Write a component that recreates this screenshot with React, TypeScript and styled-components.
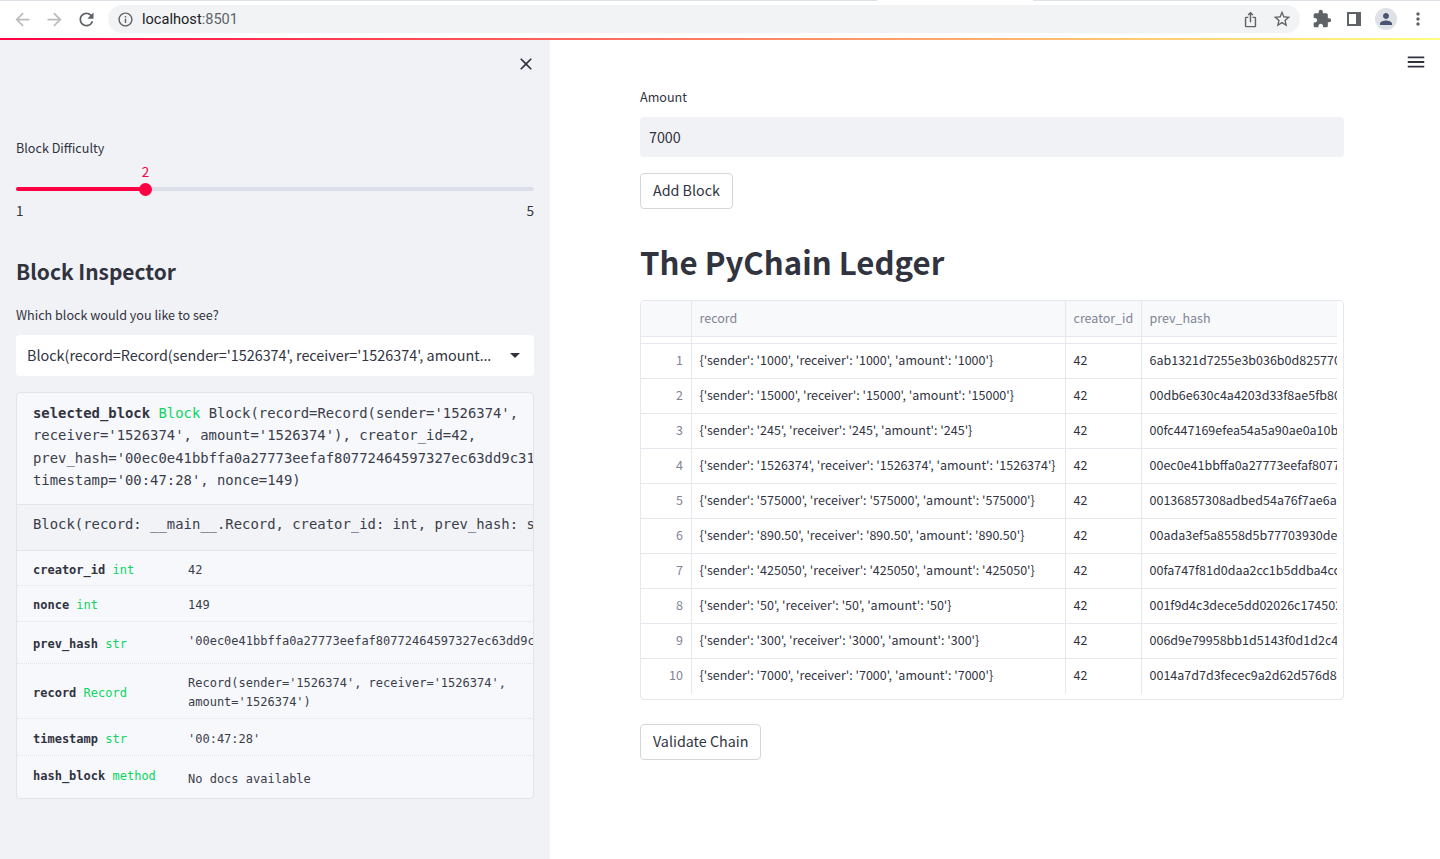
import React from "react";
import styled, { createGlobalStyle } from "styled-components";
import {
  MdArrowBack,
  MdArrowForward,
  MdClose,
  MdExtension,
  MdInfoOutline,
  MdIosShare,
  MdMenu,
  MdMoreVert,
  MdPerson,
  MdRefresh,
  MdStarBorder,
} from "react-icons/md";

const sans = `"Noto Sans CJK SC", "Noto Sans", sans-serif`;
const mono = `"DejaVu Sans Mono", "Liberation Mono", monospace`;
const red = "#ff0044";
const ink = "#31333f";

const GlobalStyle = createGlobalStyle`
  html, body { margin: 0; padding: 0; height: 100%; overflow: hidden; background: #fff; }
  * { box-sizing: border-box; }
  #root { height: 100%; }
`;

const Page = styled.div`
  height: 859px;
  display: flex;
  flex-direction: column;
  font-family: ${sans};
  color: ${ink};
`;

const Chrome = styled.header`
  height: 38px;
  flex: none;
  display: flex;
  flex-direction: column;
  background: #fff;
`;

const TabEdge = styled.div`
  height: 1px;
  display: flex;
  background: #dee1e6;
`;

const TabGap = styled.div`
  width: 156px;
  margin-left: 877px;
  background: #fff;
`;

const ChromeRow = styled.div`
  flex: 1;
  display: flex;
  align-items: center;
  padding: 3px 10px 4px 10px;
`;

const NavButton = styled.span<{ $off?: boolean; $gap?: number }>`
  width: 24px;
  height: 24px;
  margin-right: ${(p) => p.$gap ?? 8}px;
  display: flex;
  align-items: center;
  justify-content: center;
  font-size: 21px;
  color: ${(p) => (p.$off ? "#babcbe" : "#5f6368")};
`;

const Omnibox = styled.div`
  flex: 1;
  height: 28px;
  margin-left: 1px;
  padding: 0 6px 0 9px;
  display: flex;
  align-items: center;
  border-radius: 14px;
  background: #f1f3f4;
  color: #5f6368;
`;

const Url = styled.span`
  margin-left: 8px;
  flex: 1;
  font: 14.6px "Roboto", sans-serif;
  color: #5f6368;
  b { font-weight: 400; color: #202124; }
`;

const OmniIcon = styled.span`
  width: 24px;
  margin-left: 8px;
  display: flex;
  justify-content: center;
  font-size: 20px;
  color: #5f6368;
`;

const ToolIcon = styled.span<{ $left: number }>`
  width: 24px;
  height: 24px;
  margin-left: ${(p) => p.$left}px;
  display: flex;
  align-items: center;
  justify-content: center;
  font-size: 20px;
  color: #5f6368;
`;

const Avatar = styled.span`
  width: 22px;
  height: 22px;
  margin-left: 9px;
  display: flex;
  align-items: center;
  justify-content: center;
  border-radius: 50%;
  background: #dee1e6;
  color: #4a5573;
  font-size: 18px;
`;

const Decoration = styled.div`
  height: 2px;
  flex: none;
  background: linear-gradient(90deg, ${red}, #ffff80);
`;

const Body = styled.div`
  flex: 1;
  min-height: 0;
  display: flex;
`;

const Sidebar = styled.aside`
  width: 550px;
  flex: none;
  padding: 0 16px;
  background: #f0f2f6;
`;

const CloseRow = styled.div`
  height: 98px;
  padding: 14px 0 0;
  margin-right: -2px;
  display: flex;
  justify-content: flex-end;
  font-size: 20px;
  color: ${ink};
`;

const Label = styled.div`
  font-size: 12.6px;
  line-height: 20px;
  color: ${ink};
`;

const SliderBox = styled.div`
  position: relative;
  height: 62px;
  padding-top: 29px;
`;

const Track = styled.div`
  height: 4px;
  border-radius: 2px;
  background: #dcdfe9;
`;

const TrackFill = styled.div`
  position: relative;
  height: 100%;
  border-radius: 2px;
  background: ${red};
`;

const Thumb = styled.span`
  position: absolute;
  right: -6.5px;
  top: -4.5px;
  width: 13px;
  height: 13px;
  border-radius: 50%;
  background: ${red};
`;

const ThumbValue = styled.span`
  position: absolute;
  right: -10px;
  top: -26px;
  width: 20px;
  text-align: center;
  font-size: 13.5px;
  line-height: 20px;
  color: ${red};
`;

const SliderEnds = styled.div`
  margin-top: 9px;
  display: flex;
  justify-content: space-between;
  font-size: 13.5px;
  line-height: 20px;
`;

const SideHeading = styled.h2`
  margin: 33px 0 0;
  font-size: 20.9px;
  line-height: 36px;
  font-weight: 700;
  color: ${ink};
`;

const SelectLabel = styled(Label)`
  margin-top: 16px;
`;

const Select = styled.div`
  margin-top: 10px;
  height: 41px;
  padding: 0 12px 2px 11px;
  display: flex;
  align-items: center;
  gap: 15px;
  border-radius: 4px;
  background: #fff;
  font-size: 14.4px;
`;

const SelectText = styled.span`
  flex: 1;
  min-width: 0;
  overflow: hidden;
  white-space: nowrap;
`;

const Dots = styled.span`
  font-family: "Noto Sans", sans-serif;
`;

const Caret = styled.span`
  width: 0;
  height: 0;
  margin: 2px 2px 0 0;
  border-left: 5px solid transparent;
  border-right: 5px solid transparent;
  border-top: 5px solid ${ink};
`;

const Inspect = styled.section`
  margin-top: 16px;
  height: 407px;
  overflow: hidden;
  border: 1px solid #e1e4ea;
  border-radius: 4px;
  background: #f6f8fc;
  font-family: ${mono};
  color: #3b3d4a;
`;

const InspectHead = styled.div`
  height: 112px;
  padding: 9px 0 0 16px;
  border-bottom: 1px solid #e2e5ea;
  font-size: 13.9px;
  line-height: 22.3px;
  white-space: pre;
`;

const InspectDoc = styled.div`
  height: 46px;
  padding: 8px 0 0 16px;
  background: #f1f3f7;
  border-bottom: 1px solid #e2e5ea;
  font-size: 13.9px;
  line-height: 22.4px;
  white-space: pre;
`;

const Name = styled.b`
  font-weight: 700;
  color: #31333f;
`;

const TypeTag = styled.span`
  color: #09d65f;
`;

const AttrRow = styled.div<{ $height: number }>`
  height: ${(p) => p.$height}px;
  display: grid;
  grid-template-columns: 155px 1fr;
  align-items: center;
  padding: 4px 0 0 16px;
  border-bottom: 1px dotted #dfe2e8;
  font-size: 12px;
  line-height: 19px;
  white-space: pre;

  &:last-child { border-bottom: none; }
`;

const AttrName = styled.div<{ $lift?: number }>`
  margin-top: ${(p) => -(p.$lift ?? 0)}px;
  margin-bottom: ${(p) => p.$lift ?? 0}px;
`;

const AttrValue = styled.div<{ $lift?: number }>`
  min-width: 0;
  overflow: hidden;
  margin-top: ${(p) => -(p.$lift ?? 0)}px;
  margin-bottom: ${(p) => p.$lift ?? 0}px;
`;

const Main = styled.main`
  position: relative;
  flex: 1;
  padding: 47px 96px 0 90px;
`;

const MenuButton = styled.span`
  position: absolute;
  top: 11px;
  right: 13px;
  display: flex;
  font-size: 22px;
  color: ${ink};
`;

const AmountInput = styled.div`
  margin-top: 10px;
  height: 40px;
  padding: 0 9px 2px;
  display: flex;
  align-items: center;
  border-radius: 4px;
  background: #f0f2f6;
  font-size: 14.3px;
`;

const Button = styled.button<{ $top: number }>`
  display: block;
  margin-top: ${(p) => p.$top}px;
  height: 36px;
  padding: 0 12px 3px;
  border: 1px solid #d5d6da;
  border-radius: 4px;
  background: #fff;
  font-family: ${sans};
  font-size: 14.3px;
  color: ${ink};
`;

const Heading = styled.h1`
  margin: 29px 0 0;
  height: 62px;
  font-size: 31.2px;
  line-height: 48px;
  font-weight: 700;
  color: ${ink};
`;

const Table = styled.div`
  height: 400px;
  padding-right: 6px;
  border: 1px solid #e6e8ee;
  border-radius: 4px;
  overflow: hidden;
  font-size: 12.5px;
`;

const TableRow = styled.div<{ $kind?: "head" | "gap" }>`
  display: grid;
  grid-template-columns: 50px 374px 76px 1fr;
  height: ${(p) => (p.$kind === "head" ? 36 : p.$kind === "gap" ? 7 : 35)}px;
  background: ${(p) => (p.$kind === "head" ? "#f8f9fb" : "#fff")};
  border-bottom: 1px solid #e6e8ee;

  &:last-child { border-bottom: none; }
`;

const Cell = styled.div<{ $index?: boolean; $head?: boolean }>`
  display: flex;
  align-items: center;
  justify-content: ${(p) => (p.$index ? "flex-end" : "flex-start")};
  padding: 0 8px ${(p) => (p.$head ? 2 : 4)}px 7.5px;
  overflow: hidden;
  white-space: nowrap;
  border-left: ${(p) => (p.$index ? "none" : "1px solid #e6e8ee")};
  color: ${(p) => (p.$head || p.$index ? "#808495" : ink)};
`;

const rows = [
  ["1000", "1000", "1000", "6ab1321d7255e3b036b0d825770a41f6"],
  ["15000", "15000", "15000", "00db6e630c4a4203d33f8ae5fb80a41f"],
  ["245", "245", "245", "00fc447169efea54a5a90ae0a10b3c9e"],
  ["1526374", "1526374", "1526374", "00ec0e41bbffa0a27773eefaf80772464"],
  ["575000", "575000", "575000", "00136857308adbed54a76f7ae6a1c0d2"],
  ["890.50", "890.50", "890.50", "00ada3ef5a8558d5b77703930de41f2a"],
  ["425050", "425050", "425050", "00fa747f81d0daa2cc1b5ddba4cc90e1"],
  ["50", "50", "50", "001f9d4c3dece5dd02026c17450210ab"],
  ["300", "3000", "300", "006d9e79958bb1d5143f0d1d2c4e7713"],
  ["7000", "7000", "7000", "0014a7d7d3fecec9a2d62d576d8e91c4"],
];

const fullHash = "'00ec0e41bbffa0a27773eefaf80772464597327ec63dd9c31aa4'";

function ChromeBar() {
  return (
    <Chrome>
      <TabEdge><TabGap /></TabEdge>
      <ChromeRow>
        <NavButton $off><MdArrowBack /></NavButton>
        <NavButton $off><MdArrowForward /></NavButton>
        <NavButton $gap={9}><MdRefresh /></NavButton>
        <Omnibox>
          <MdInfoOutline size={17} />
          <Url><b>localhost</b>:8501</Url>
          <OmniIcon><MdIosShare size={17} /></OmniIcon>
          <OmniIcon><MdStarBorder /></OmniIcon>
        </Omnibox>
        <ToolIcon $left={10}><MdExtension /></ToolIcon>
        <ToolIcon $left={8}>
          <svg width="14" height="14" viewBox="0 0 14 14">
            <path fill="#5f6368" fillRule="evenodd" d="M0 0h14v14H0zM2 2v10h7V2z" />
          </svg>
        </ToolIcon>
        <Avatar><MdPerson /></Avatar>
        <ToolIcon $left={9}><MdMoreVert /></ToolIcon>
      </ChromeRow>
    </Chrome>
  );
}

function Slider({ min, max, value }: { min: number; max: number; value: number }) {
  const pct = ((value - min) / (max - min)) * 100;
  return (
    <SliderBox>
      <Track>
        <TrackFill style={{ width: `${pct}%` }}>
          <ThumbValue>{value}</ThumbValue>
          <Thumb />
        </TrackFill>
      </Track>
      <SliderEnds>
        <span>{min}</span>
        <span>{max}</span>
      </SliderEnds>
    </SliderBox>
  );
}

function BlockInspector() {
  return (
    <Inspect>
      <InspectHead>
        <Name>selected_block</Name> <TypeTag>Block</TypeTag> Block(record=Record(sender='1526374',{"\n"}
        receiver='1526374', amount='1526374'), creator_id=42,{"\n"}
        prev_hash={fullHash},{"\n"}
        timestamp='00:47:28', nonce=149)
      </InspectHead>
      <InspectDoc>Block(record: __main__.Record, creator_id: int, prev_hash: str, timestamp: str, nonce: int)</InspectDoc>
      <AttrRow $height={35}>
        <AttrName><Name>creator_id</Name> <TypeTag>int</TypeTag></AttrName>
        <AttrValue>42</AttrValue>
      </AttrRow>
      <AttrRow $height={36}>
        <AttrName><Name>nonce</Name> <TypeTag>int</TypeTag></AttrName>
        <AttrValue>149</AttrValue>
      </AttrRow>
      <AttrRow $height={42}>
        <AttrName><Name>prev_hash</Name> <TypeTag>str</TypeTag></AttrName>
        <AttrValue $lift={3}>{fullHash}</AttrValue>
      </AttrRow>
      <AttrRow $height={55}>
        <AttrName><Name>record</Name> <TypeTag>Record</TypeTag></AttrName>
        <AttrValue>Record(sender='1526374', receiver='1526374',{"\n"}amount='1526374')</AttrValue>
      </AttrRow>
      <AttrRow $height={37}>
        <AttrName><Name>timestamp</Name> <TypeTag>str</TypeTag></AttrName>
        <AttrValue>'00:47:28'</AttrValue>
      </AttrRow>
      <AttrRow $height={43}>
        <AttrName $lift={3}><Name>hash_block</Name> <TypeTag>method</TypeTag></AttrName>
        <AttrValue>No docs available</AttrValue>
      </AttrRow>
    </Inspect>
  );
}

function Ledger() {
  return (
    <Table>
      <TableRow $kind="head">
        <Cell $head $index />
        <Cell $head>record</Cell>
        <Cell $head>creator_id</Cell>
        <Cell $head>prev_hash</Cell>
      </TableRow>
      <TableRow $kind="gap">
        <Cell $index />
        <Cell />
        <Cell />
        <Cell />
      </TableRow>
      {rows.map(([sender, receiver, amount, hash], i) => (
        <TableRow key={hash}>
          <Cell $index>{i + 1}</Cell>
          <Cell>{`{'sender': '${sender}', 'receiver': '${receiver}', 'amount': '${amount}'}`}</Cell>
          <Cell>42</Cell>
          <Cell>{hash}</Cell>
        </TableRow>
      ))}
    </Table>
  );
}

export default function App() {
  return (
    <Page>
      <GlobalStyle />
      <ChromeBar />
      <Decoration />
      <Body>
        <Sidebar>
          <CloseRow><MdClose /></CloseRow>
          <Label>Block Difficulty</Label>
          <Slider min={1} max={5} value={2} />
          <SideHeading>Block Inspector</SideHeading>
          <SelectLabel>Which block would you like to see?</SelectLabel>
          <Select>
            <SelectText>Block(record=Record(sender='1526374', receiver='1526374', amount<Dots>…</Dots></SelectText>
            <Caret />
          </Select>
          <BlockInspector />
        </Sidebar>
        <Main>
          <MenuButton><MdMenu /></MenuButton>
          <Label>Amount</Label>
          <AmountInput>7000</AmountInput>
          <Button $top={16}>Add Block</Button>
          <Heading>The PyChain Ledger</Heading>
          <Ledger />
          <Button $top={24}>Validate Chain</Button>
        </Main>
      </Body>
    </Page>
  );
}
